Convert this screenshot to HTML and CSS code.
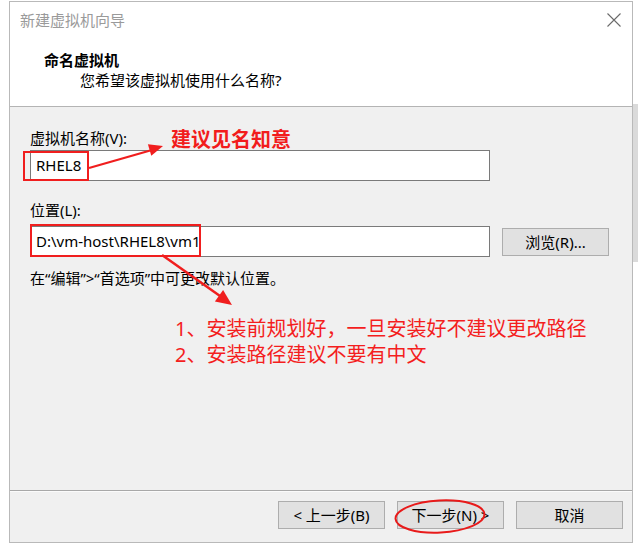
FILE: index.html
```html
<!DOCTYPE html>
<html lang="zh-CN">
<head>
<meta charset="utf-8">
<title>新建虚拟机向导</title>
<link rel="stylesheet" href="styles.css">
</head>
<body>
<div class="dialog">
  <div class="titlebar">
    <span class="title">新建虚拟机向导</span>
    <svg class="close" width="14" height="14" viewBox="0 0 14 14"><path d="M0.5 0.5L13.5 13.5M13.5 0.5L0.5 13.5" stroke="#6a6a6a" stroke-width="1.1" fill="none"/></svg>
  </div>
  <div class="header">
    <div class="h1">命名虚拟机</div>
    <div class="h2">您希望该虚拟机使用什么名称?</div>
  </div>
  <div class="content">
    <div class="label label-name">虚拟机名称(V):</div>
    <div class="input">RHEL8</div>
    <div class="label label-loc">位置(L):</div>
    <div class="row">
      <div class="input">D:\vm-host\RHEL8\vm1</div>
      <div class="btn browse">浏览(R)...</div>
    </div>
    <div class="note">在“编辑”&gt;“首选项”中可更改默认位置。</div>
  </div>
  <div class="footer">
    <div class="btn">&lt; 上一步(B)</div>
    <div class="btn">下一步(N) &gt;</div>
    <div class="btn">取消</div>
  </div>
</div>
<div class="scrollbit"></div>

<div class="anno">
  <svg class="anno-svg" width="638" height="544" viewBox="0 0 638 544">
    <rect x="24" y="152" width="64" height="28" fill="none" stroke="#f01e1e" stroke-width="2"/>
    <rect x="31" y="225" width="169" height="31" fill="none" stroke="#f01e1e" stroke-width="2"/>
    <line x1="89" y1="168" x2="152" y2="150" stroke="#f01e1e" stroke-width="2.2"/>
    <polygon points="163,146 151.3,155.7 147.9,144.3" fill="#f01e1e"/>
    <line x1="162" y1="255" x2="220" y2="296" stroke="#f01e1e" stroke-width="2.5"/>
    <polygon points="232,305 214.9,301.4 223.1,290" fill="#f01e1e"/>
    <ellipse cx="440" cy="516.5" rx="44.5" ry="16" fill="none" stroke="#e81a1a" stroke-width="2" transform="rotate(-3 440 516.5)"/>
  </svg>
  <div class="tip tip-name">建议见名知意</div>
  <div class="tip-list">
    <div>1、安装前规划好，一旦安装好不建议更改路径</div>
    <div>2、安装路径建议不要有中文</div>
  </div>
</div>
</body>
</html>
```

FILE: styles.css
```css
html, body {
  margin: 0;
  padding: 0;
  background: #ffffff;
}
body {
  width: 638px;
  height: 544px;
  position: relative;
  overflow: hidden;
  font-family: "Noto Sans", "Noto Sans CJK SC", sans-serif;
  font-size: 15px;
  color: #000;
}
.dialog {
  margin: 1px 0 0 9px;
  width: 622px;
  height: 540px;
  border: 1px solid #b9b9b9;
  display: flex;
  flex-direction: column;
  background: #f0f0f0;
}
.titlebar {
  height: 38px;
  background: #fff;
  display: flex;
  align-items: center;
  justify-content: space-between;
  padding: 0 11px 0 10px;
}
.title {
  color: #9a9a9a;
  line-height: 20px;
  padding-bottom: 2px;
}
.close {
  display: block;
  margin-top: -3px;
}
.header {
  height: 67px;
  background: #fff;
  border-bottom: 1px solid #b4b4b4;
  padding-top: 10px;
  box-sizing: border-box;
}
.h1 {
  font-weight: bold;
  line-height: 20px;
  padding-left: 34px;
}
.h2 {
  line-height: 20px;
  padding-left: 70px;
}
.content {
  height: 383px;
  padding: 21px 0 0 20px;
  box-sizing: border-box;
  display: flex;
  flex-direction: column;
  align-items: flex-start;
}
.label {
  line-height: 20px;
}
.label-name {
  margin-bottom: 2px;
}
.label-loc {
  margin-top: 19px;
  margin-bottom: 6px;
}
.input {
  width: 460px;
  height: 31px;
  box-sizing: border-box;
  border: 1px solid #7a7a7a;
  background: #fff;
  padding: 0 5px;
  line-height: 29px;
}
.row {
  display: flex;
  align-items: center;
  gap: 12px;
}
.btn {
  width: 107px;
  height: 28px;
  box-sizing: border-box;
  border: 1px solid #adadad;
  background: #e1e1e1;
  display: flex;
  align-items: center;
  justify-content: center;
  line-height: 20px;
}
.note {
  margin-top: 11px;
  line-height: 20px;
}
.footer {
  flex: 1;
  border-top: 1px solid #a8a8a8;
  box-shadow: inset 0 1px 0 #fbfbfb;
  display: flex;
  justify-content: flex-end;
  align-items: flex-start;
  gap: 12px;
  padding: 10px 9px 0 0;
}
.scrollbit {
  position: absolute;
  left: 633px;
  top: 104px;
  width: 5px;
  height: 158px;
  background: #dadada;
}
.anno {
  position: absolute;
  left: 0;
  top: 0;
  width: 638px;
  height: 544px;
  pointer-events: none;
}
.anno-svg {
  position: absolute;
  left: 0;
  top: 0;
}
.tip {
  position: absolute;
  color: #f21c1c;
  font-weight: bold;
  font-size: 20px;
  line-height: 26px;
}
.tip-name {
  left: 171px;
  top: 127px;
}
.tip-list {
  position: absolute;
  left: 175px;
  top: 316px;
  color: #f41e1e;
  font-size: 20px;
  line-height: 26px;
}
```
